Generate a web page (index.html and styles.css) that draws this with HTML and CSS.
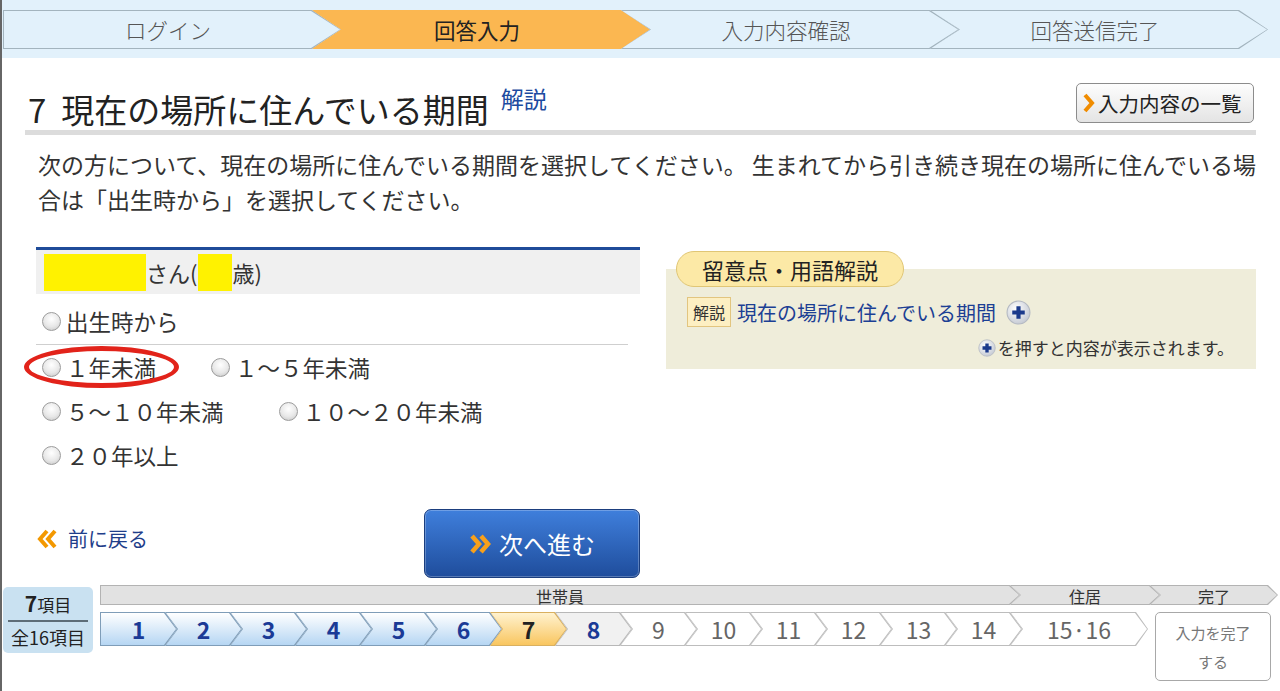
FILE: index.html
```html
<!DOCTYPE html>
<html lang="ja">
<head>
    <meta charset="UTF-8">
    <meta name="viewport" content="width=device-width, initial-scale=1.0">
    <title>回答入力 - 現在の場所に住んでいる期間</title>
    <link rel="stylesheet" href="styles.css">
</head>
<body>
    <ol class="flow">
        <li class="flow-step"><span>ログイン</span></li>
        <li class="flow-step is-current"><span>回答入力</span></li>
        <li class="flow-step"><span>入力内容確認</span></li>
        <li class="flow-step"><span>回答送信完了</span></li>
    </ol>

    <main class="content">
        <div class="q-head">
            <h1 class="q-title"><span class="q-no">7</span>現在の場所に住んでいる期間<a href="#" class="q-help">解説</a></h1>
            <button class="list-button" type="button">
                <svg width="12" height="20" viewBox="0 0 12 20"><path d="M2 2l7 8-7 8" fill="none" stroke="#f08c00" stroke-width="4"/></svg>
                入力内容の一覧
            </button>
        </div>

        <p class="q-text">次の方について、現在の場所に住んでいる期間を選択してください。 生まれてから引き続き現在の場所に住んでいる場合は「出生時から」を選択してください。</p>

        <div class="q-body">
            <div class="answer">
                <div class="person"><span class="mask mask-name"></span>さん(<span class="mask mask-age"></span>歳)</div>
                <div class="choices">
                    <div class="choice-row choice-row-first">
                        <label class="choice"><input type="radio" name="period">出生時から</label>
                    </div>
                    <div class="choice-row">
                        <label class="choice"><input type="radio" name="period">１年未満<span class="choice-mark"></span></label>
                        <label class="choice"><input type="radio" name="period">１～５年未満</label>
                    </div>
                    <div class="choice-row">
                        <label class="choice"><input type="radio" name="period">５～１０年未満</label>
                        <label class="choice"><input type="radio" name="period">１０～２０年未満</label>
                    </div>
                    <div class="choice-row">
                        <label class="choice"><input type="radio" name="period">２０年以上</label>
                    </div>
                </div>

                <div class="nav">
                    <a href="#" class="back-link">
                        <svg width="22" height="22" viewBox="0 0 22 22"><path d="M19 3l-7 8 7 8M11 3l-7 8 7 8" fill="none" stroke="#f39800" stroke-width="4"/></svg>
                        前に戻る
                    </a>
                    <button class="next-button" type="button">
                        <svg width="24" height="22" viewBox="0 0 24 22"><path d="M3 3l7 8-7 8M12 3l7 8-7 8" fill="none" stroke="#f7a01c" stroke-width="4.5"/></svg>
                        次へ進む
                    </button>
                </div>
            </div>

            <aside class="notes">
                <div class="notes-tab">留意点・用語解説</div>
                <div class="notes-body">
                    <div class="note-row">
                        <span class="note-label">解説</span>
                        <a href="#" class="note-link">現在の場所に住んでいる期間</a>
                        <svg class="plus" width="25" height="25" viewBox="0 0 24 24"><defs><radialGradient id="pg1" cx="40%" cy="35%" r="70%"><stop offset="0" stop-color="#ffffff"/><stop offset="1" stop-color="#c3c8d2"/></radialGradient></defs><circle cx="12" cy="12" r="11" fill="url(#pg1)" stroke="#b3b8c2"/><path d="M12 6v12M6 12h12" stroke="#1b3a8c" stroke-width="4"/></svg>
                    </div>
                    <p class="note-hint">
                        <svg width="18" height="18" viewBox="0 0 24 24"><defs><radialGradient id="pg2" cx="40%" cy="35%" r="70%"><stop offset="0" stop-color="#ffffff"/><stop offset="1" stop-color="#c3c8d2"/></radialGradient></defs><circle cx="12" cy="12" r="11" fill="url(#pg2)" stroke="#b3b8c2"/><path d="M12 6v12M6 12h12" stroke="#1b3a8c" stroke-width="4.5"/></svg>を押すと内容が表示されます。
                    </p>
                </div>
            </aside>
        </div>
    </main>

    <div class="progress">
        <div class="progress-count">
            <div class="count-now"><b>7</b>項目</div>
            <div class="count-all">全16項目</div>
        </div>
        <div class="progress-map">
            <div class="groups">
                <div class="group group-first"><span>世帯員</span></div>
                <div class="group"><span>住居</span></div>
                <div class="group group-last"><span>完了</span></div>
            </div>
            <div class="steps">
                <ol class="items">
                    <li class="item is-done"><span>1</span></li>
                    <li class="item is-done"><span>2</span></li>
                    <li class="item is-done"><span>3</span></li>
                    <li class="item is-done"><span>4</span></li>
                    <li class="item is-done"><span>5</span></li>
                    <li class="item is-done"><span>6</span></li>
                    <li class="item is-current"><span>7</span></li>
                    <li class="item is-open"><span>8</span></li>
                    <li class="item"><span>9</span></li>
                    <li class="item"><span>10</span></li>
                    <li class="item"><span>11</span></li>
                    <li class="item"><span>12</span></li>
                    <li class="item"><span>13</span></li>
                    <li class="item"><span>14</span></li>
                    <li class="item item-wide"><span>15·16</span></li>
                </ol>
                <div class="finish">入力を完了する</div>
            </div>
        </div>
    </div>
</body>
</html>
```

FILE: styles.css
```css
html, body {
    margin: 0;
    padding: 0;
}
body {
    box-sizing: border-box;
    min-height: 100vh;
    border-left: 2px solid #666;
    font-family: "Noto Sans CJK JP", "Noto Sans", sans-serif;
    color: #333;
    background: #fff;
}

/* top flow */
.flow {
    display: flex;
    margin: 0;
    padding: 10px 0 9px 1px;
    list-style: none;
    background: #e2f1fb;
}
.flow-step {
    position: relative;
    display: flex;
    align-items: center;
    justify-content: center;
    flex: none;
    width: 338px;
    height: 39px;
    margin-left: -29px;
    background: #a3b4be;
    clip-path: polygon(0 0, calc(100% - 29px) 0, 100% 50%, calc(100% - 29px) 100%, 0 100%, 29px 50%);
    font-size: 21.5px;
    font-weight: 300;
    color: #555;
}
.flow-step:first-child {
    margin-left: 0;
    clip-path: polygon(0 0, calc(100% - 29px) 0, 100% 50%, calc(100% - 29px) 100%, 0 100%);
}
.flow-step::before {
    content: "";
    position: absolute;
    inset: 1px;
    background: #e2f1fb;
    clip-path: inherit;
}
.flow-step span {
    position: relative;
    left: -4px;
}
.flow-step.is-current {
    background: #fbb751;
    font-weight: normal;
    color: #222;
}
.flow-step.is-current::before {
    background: #fbb751;
}

/* question */
.content {
    margin: 0 24px 0 23px;
}
.q-head {
    display: flex;
    align-items: center;
    justify-content: space-between;
    height: 54px;
    padding: 18px 2px 0 3px;
    border-bottom: 5px solid #dcdcdc;
}
.q-title {
    margin: 0;
    font-size: 33px;
    line-height: 42px;
    font-weight: normal;
    color: #222;
}
.q-no {
    margin-right: 15px;
}
.q-help {
    margin-left: 12px;
    font-size: 23px;
    vertical-align: 15px;
    color: #1c4aa0;
    text-decoration: none;
}
.list-button {
    display: flex;
    align-items: center;
    gap: 3px;
    width: 178px;
    height: 40px;
    padding: 0 4px 0 6px;
    border: 1px solid #8c8c8c;
    border-radius: 5px;
    background: linear-gradient(#fdfdfd, #e4e4e4);
    font-family: inherit;
    font-size: 20.5px;
    color: #222;
}
.q-text {
    margin: 12px 0 0;
    padding-left: 13px;
    font-size: 23px;
    line-height: 35px;
    color: #333;
}

.q-body {
    display: flex;
    margin-top: 30px;
}
.answer {
    width: 604px;
    margin-left: 11px;
}
.person {
    display: flex;
    align-items: center;
    height: 44px;
    padding-left: 8px;
    border-top: 3px solid #1f4b99;
    background: #f0f0f0;
    font-size: 22px;
}
.mask {
    display: inline-block;
    height: 37px;
    background: #fff200;
}
.mask-name {
    width: 102px;
}
.mask-age {
    width: 34px;
    margin-left: 1px;
}

.choices {
    margin-top: 4px;
}
.choice-row {
    display: flex;
    align-items: center;
    height: 44px;
    padding-left: 6px;
    font-size: 22.5px;
}
.choice-row-first {
    height: 46px;
    margin-right: 12px;
    border-bottom: 1px solid #cfcfcf;
}
.choice {
    position: relative;
    display: flex;
    align-items: center;
    margin-right: 55px;
}
.choice input {
    appearance: none;
    width: 19px;
    height: 19px;
    margin: 0 5px 0 0;
    border: 1px solid #9c9c9c;
    border-radius: 50%;
    background: radial-gradient(circle at 50% 35%, #ffffff 0%, #e8e8e8 55%, #c2c2c2 100%);
}
.choice-mark {
    position: absolute;
    left: -18px;
    top: 50%;
    width: 155px;
    height: 42px;
    margin-top: -21px;
    box-sizing: border-box;
    border: 5px solid #e2231a;
    border-radius: 50%;
}

.nav {
    display: flex;
    align-items: center;
    justify-content: space-between;
    margin-top: 32px;
}
.back-link {
    display: flex;
    align-items: center;
    gap: 10px;
    margin-top: -10px;
    font-size: 20px;
    color: #1f3e8a;
    text-decoration: none;
}
.next-button {
    display: flex;
    align-items: center;
    justify-content: center;
    gap: 6px;
    width: 216px;
    height: 69px;
    border: 1px solid #1b3e7e;
    border-radius: 7px;
    background: linear-gradient(#3f7fdc, #1f4d9c);
    box-shadow: inset 0 0 0 1px rgba(255, 255, 255, 0.25);
    font-family: inherit;
    font-size: 24px;
    color: #fff;
}

/* notes */
.notes {
    flex: 1;
    margin: 4px 0 0 26px;
}
.notes-tab {
    position: relative;
    display: inline-block;
    height: 34px;
    margin-left: 10px;
    padding: 0 25px;
    border: 1px solid #e0c675;
    border-radius: 18px;
    background: #fce9a6;
    font-size: 22px;
    line-height: 34px;
    color: #222;
}
.notes-body {
    margin-top: -18px;
    padding: 28px 22px 9px 21px;
    background: #efedda;
}
.note-row {
    display: flex;
    align-items: center;
}
.note-label {
    padding: 0 5px;
    height: 28px;
    border: 1px solid #e2c57f;
    background: #fdefc2;
    font-size: 16px;
    line-height: 28px;
    color: #333;
}
.note-link {
    margin-left: 6px;
    font-size: 20px;
    color: #1c3f94;
    text-decoration: none;
}
.plus {
    margin-left: 10px;
}
.note-hint {
    display: flex;
    align-items: center;
    justify-content: flex-end;
    gap: 2px;
    margin: 9px 0 0;
    font-size: 17px;
    line-height: 24px;
    color: #333;
}

/* progress */
.progress {
    display: flex;
    align-items: flex-start;
    gap: 7px;
    margin-top: 7px;
    padding-left: 1px;
}
.progress-count {
    width: 90px;
    height: 66px;
    margin-top: 2px;
    padding: 0 5px;
    box-sizing: border-box;
    border-radius: 5px;
    background: #c9e1f1;
    text-align: center;
    color: #222;
}
.count-now {
    height: 33px;
    border-bottom: 2px solid #5d6d78;
    font-size: 17px;
    line-height: 33px;
}
.count-now b {
    font-size: 21px;
}
.count-all {
    font-size: 18px;
    line-height: 30px;
}

.groups {
    display: flex;
}
.group {
    position: relative;
    display: flex;
    align-items: center;
    justify-content: center;
    flex: none;
    width: 150px;
    height: 20px;
    margin-left: -10px;
    background: #b3b3b3;
    clip-path: polygon(0 0, calc(100% - 10px) 0, 100% 50%, calc(100% - 10px) 100%, 0 100%, 10px 50%);
    font-size: 16px;
    line-height: 20px;
    color: #333;
}
.group::before {
    content: "";
    position: absolute;
    inset: 1px;
    background: #e2e2e2;
    clip-path: inherit;
}
.group span {
    position: relative;
    top: 1px;
}
.group-first {
    width: 920px;
    margin-left: 0;
    clip-path: polygon(0 0, calc(100% - 10px) 0, 100% 50%, calc(100% - 10px) 100%, 0 100%);
}
.group-last {
    width: 128px;
}

.steps {
    display: flex;
    align-items: flex-start;
    margin-top: 7px;
}
.items {
    display: flex;
    margin: 0;
    padding: 0;
    list-style: none;
}
.item {
    position: relative;
    display: flex;
    align-items: center;
    justify-content: center;
    flex: none;
    width: 77px;
    height: 34px;
    margin-left: -12px;
    background: #bdbdbd;
    clip-path: polygon(0 0, calc(100% - 12px) 0, 100% 50%, calc(100% - 12px) 100%, 0 100%, 12px 50%);
    font-size: 23px;
    color: #666;
}
.item:first-child {
    margin-left: 0;
    clip-path: polygon(0 0, calc(100% - 12px) 0, 100% 50%, calc(100% - 12px) 100%, 0 100%);
}
.item::before {
    content: "";
    position: absolute;
    inset: 1px;
    background: #fff;
    clip-path: inherit;
}
.item span {
    position: relative;
}
.item.is-done {
    background: #7f9db8;
    font-weight: bold;
    color: #1b3a96;
}
.item.is-done::before {
    background: linear-gradient(#ffffff, #b6d6f3);
}
.item.is-current {
    background: #d9b060;
    font-weight: bold;
    color: #222;
}
.item.is-current::before {
    background: linear-gradient(#fff2cf, #f9c660);
}
.item.is-open {
    background: #b8b8b8;
    font-weight: bold;
    color: #1b3a96;
}
.item.is-open::before {
    background: #f1f1f1;
}
.item-wide {
    width: 138px;
}
.finish {
    width: 116px;
    height: 69px;
    margin-left: 7px;
    padding: 5px 14px 0;
    box-sizing: border-box;
    border: 1px solid #a8a8a8;
    border-radius: 5px;
    background: #fff;
    text-align: center;
    font-size: 15px;
    line-height: 29px;
    color: #777;
}
```
